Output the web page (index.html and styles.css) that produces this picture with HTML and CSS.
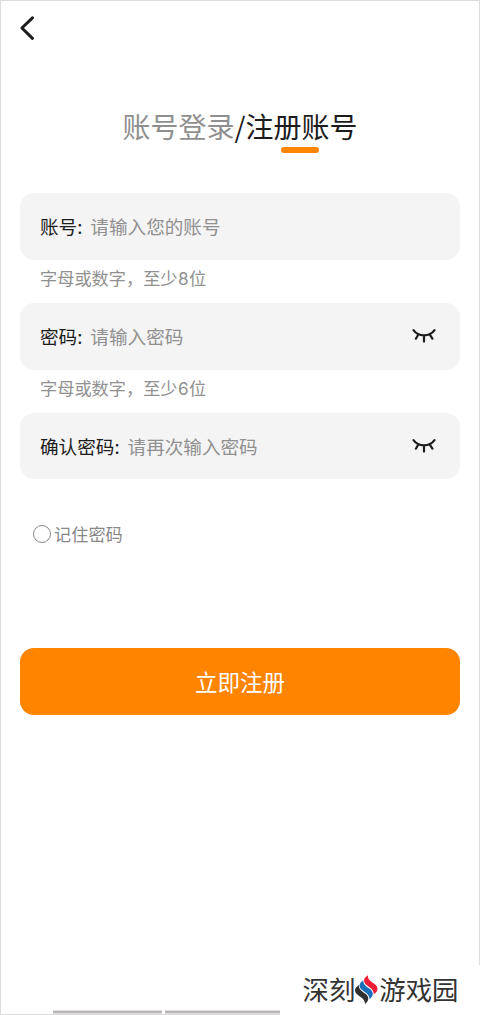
FILE: index.html
```html
<!DOCTYPE html>
<html lang="zh-CN">
<head>
<meta charset="utf-8">
<title>注册账号</title>
<link rel="stylesheet" href="styles.css">
</head>
<body>
<main class="screen">
  <header class="topbar">
    <svg class="back" viewBox="0 0 24 30" fill="none"><path d="M16.500 4.900 5.900 15 16.500 25.300" stroke="#1c1c1c" stroke-width="3" stroke-linecap="round" stroke-linejoin="round"/></svg>
  </header>
  <nav class="tabs">
    <span class="tab">账号登录</span><span class="slash">/</span><span class="tab tab-active">注册账号</span>
  </nav>
  <form class="form">
    <div class="field"><span class="label">账号:</span><span class="placeholder">请输入您的账号</span></div>
    <p class="hint">字母或数字，至少<span class="digit">8</span>位</p>
    <div class="field"><span class="label">密码:</span><span class="placeholder">请输入密码</span>
      <svg class="eye" viewBox="0 0 24 16" fill="none" stroke="#1c1c1c" stroke-width="2.200" stroke-linecap="round"><path d="M1.500 2.100C6.500 9.100 17.500 9.100 22.500 2.100M12 7.800v5.800M6.200 6.700 3.900 10.700M17.800 6.700l2.600 4"/></svg>
    </div>
    <p class="hint">字母或数字，至少<span class="digit">6</span>位</p>
    <div class="field field-last"><span class="label">确认密码:</span><span class="placeholder">请再次输入密码</span>
      <svg class="eye" viewBox="0 0 24 16" fill="none" stroke="#1c1c1c" stroke-width="2.200" stroke-linecap="round"><path d="M1.500 2.100C6.500 9.100 17.500 9.100 22.500 2.100M12 7.800v5.800M6.200 6.700 3.900 10.700M17.800 6.700l2.600 4"/></svg>
    </div>
    <div class="remember"><span class="radio"></span><span>记住密码</span></div>
    <div class="submit">立即注册</div>
  </form>
  <div class="homebar"><span class="seg seg-left"></span><span class="seg seg-right"></span></div>
  <footer class="watermark">
    <span class="brand">深刻</span>
    <svg class="logo" viewBox="0 0 24 30"><path fill="#303030" d="M3.800 10C1 12 0 13.500 0 15.500c0 5.500 10.500 6.500 10 13.500 2-1.500 3.300-3.500 3.300-5.500C13.300 17.500 3 17 3.800 10Z"/><path fill="#1b70b8" d="M8.300 5.300C5.500 7.300 4.500 8.800 4.500 10.800c0 5.500 10.500 6.500 10 13.500 2-1.500 3.300-3.500 3.300-5.500 0-6-10.300-6.500-9.500-13.500Z"/><path fill="#ee1c35" d="M12.800.3C10 2.300 9 3.800 9 5.800c0 5.500 10.300 6.500 9.800 13.500 2.300-1.500 3.700-3.500 3.700-5.500C22.500 7.800 12 7.300 12.800.3Z"/></svg>
    <span class="brand">游戏园</span>
  </footer>
</main>
</body>
</html>
```

FILE: styles.css
```css
* { box-sizing: border-box; }
body { margin: 0; background: #fff; font-family: "Noto Sans CJK SC", sans-serif; }
.screen { position: relative; width: 480px; height: 1015px; border: 1px solid #dfdddb; background: #fff; }
.topbar { height: 55px; padding: 12px 0 0 15px; }
.back { display: block; width: 24px; height: 30px; }
.tabs { display: flex; justify-content: center; margin-top: 51px; height: 46px; font-size: 28px; line-height: 38px; color: #8f8f8f; }
.slash { width: 11px; color: #1c1c1c; text-align: center; }
.tab-active { position: relative; color: #1c1c1c; }
.tab-active::after { content: ""; position: absolute; left: 35px; top: 40px; width: 38px; height: 6px; border-radius: 3px; background: #ff8400; }
.form { padding: 40px 19px 0; }
.field { display: flex; align-items: center; height: 67px; padding: 0 24.5px 2px 20px; border-radius: 14px; background: #f4f4f4; font-size: 18.6px; line-height: 28px; }
.field-last { height: 66px; padding-bottom: 1px; }
.label { color: #1c1c1c; }
.placeholder { margin-left: 8px; color: #909090; }
.eye { width: 24px; height: 16px; margin-left: auto; }
.hint { height: 43px; margin: 0; padding-left: 20px; font-size: 17.2px; line-height: 36px; color: #909090; }
.digit { display: inline-block; width: 11.5px; font-family: Inter, sans-serif; text-align: center; }
.remember { display: flex; align-items: center; height: 28px; margin-top: 41px; padding-left: 13px; gap: 3px; font-size: 17.2px; line-height: 28px; color: #888; }
.radio { width: 18px; height: 18px; border: 1.5px solid #888; border-radius: 50%; }
.submit { height: 67px; margin-top: 100px; border-radius: 14px; background: #ff8400; color: #fff; font-size: 22.5px; line-height: 67px; text-align: center; }
.homebar { position: absolute; left: 52px; bottom: -1px; display: flex; gap: 3px; }
.seg { height: 5px; border: solid #dfdddb; border-width: 1px 0 2px; background: #b9b7b7; }
.seg-left { width: 109px; }
.seg-right { width: 115px; }
.watermark { position: absolute; right: -1px; bottom: -1px; display: flex; align-items: center; width: 200px; height: 50px; padding-left: 22.5px; background: #fff; color: #333; font-size: 26.4px; line-height: 48px; }
.brand { height: 50px; }
.logo { width: 24px; height: 30px; }
```
